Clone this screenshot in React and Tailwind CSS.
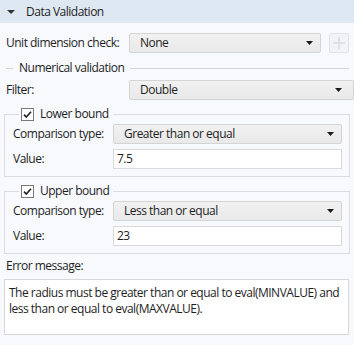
import React from "react";

function Arrow() {
  return (
    <svg width="7" height="4" viewBox="0 0 7 4" className="shrink-0">
      <path d="M0 0h7L3.5 4z" fill="#1a1a1a" />
    </svg>
  );
}

function Combo({ value, className = "" }) {
  return (
    <div
      className={`flex items-center h-[20px] pl-[10px] pr-[7px] border border-[#d4d4d4] rounded-[2px] bg-gradient-to-b from-[#f1f1f1] to-[#e9e9e9] ${className}`}
    >
      <span className="flex-1 truncate">{value}</span>
      <Arrow />
    </div>
  );
}

function Field({ value, className = "" }) {
  return (
    <div className={`flex items-center h-[20px] pl-[3px] border border-[#dadada] bg-white ${className}`}>
      {value}
    </div>
  );
}

function Check() {
  return (
    <svg width="13" height="13" viewBox="0 0 13 13" className="shrink-0">
      <rect x="0.5" y="0.5" width="12" height="12" fill="#fff" stroke="#7a7a7a" />
      <path d="M3 6.6l2.3 2.4L10 3.8" fill="none" stroke="#222" strokeWidth="1.6" />
    </svg>
  );
}

function BoundGroup({ title, comparison, value, className = "" }) {
  return (
    <fieldset className={`mx-[4px] w-[346px] border border-[#dcdcdc] pl-[8px] pr-[7px] pb-[7px] ${className}`}>
      <legend className="ml-[6px] px-[2px] flex items-center gap-[6px] h-[12px]">
        <Check />
        <span className="pr-[2px]">{title}</span>
      </legend>
      <div className="flex items-center mt-[4px]">
        <span className="w-[100px]">Comparison type:</span>
        <Combo value={comparison} className="flex-1" />
      </div>
      <div className="flex items-center mt-[5px]">
        <span className="w-[100px]">Value:</span>
        <Field value={value} className="flex-1" />
      </div>
    </fieldset>
  );
}

export default function App() {
  return (
    <div className="w-[354px] h-[345px] overflow-hidden bg-[#f7f9fc] text-[12px] leading-[16px] text-[#1e1e1e] font-['Open_Sans',sans-serif] tracking-[-0.5px]">
      {/* Section header */}
      <div className="h-[23px] bg-[#dee8f3] flex items-center">
        <svg width="8" height="4" viewBox="0 0 8 4" className="ml-[7px]">
          <path d="M0 0h8L4 4z" fill="#333" />
        </svg>
        <span className="ml-[11px]">Data Validation</span>
      </div>

      {/* Unit dimension check */}
      <div className="flex items-center mt-[10px] pl-[6px] h-[20px]">
        <span className="w-[123px]">Unit dimension check:</span>
        <Combo value="None" className="w-[192px]" />
        <div className="ml-[8px] w-[20px] h-[20px] border border-[#e1e3e6] rounded-[2px] bg-[#f1f3f6] flex items-center justify-center">
          <svg width="12" height="12" viewBox="0 0 12 12">
            <path d="M6 0v12M0 6h12" stroke="#cfd2d6" strokeWidth="1" />
          </svg>
        </div>
      </div>

      {/* Numerical validation divider */}
      <div className="flex items-center mt-[7px] h-[16px] pl-[6px] pr-[5px]">
        <div className="w-[7px] border-t border-[#d6d6d6]" />
        <span className="px-[6px]">Numerical validation</span>
        <div className="flex-1 border-t border-[#d6d6d6]" />
      </div>

      {/* Filter */}
      <div className="flex items-center mt-[4px] pl-[6px] h-[20px]">
        <span className="w-[123px]">Filter:</span>
        <Combo value="Double" className="flex-1 pr-[11px]" />
      </div>

      <BoundGroup title="Lower bound" comparison="Greater than or equal" value="7.5" className="mt-[8px]" />
      <BoundGroup title="Upper bound" comparison="Less than or equal" value="23" className="mt-[8px]" />

      {/* Error message */}
      <div className="mt-[4px] pl-[6px] h-[16px]">Error message:</div>
      <div className="mt-[5px] mx-[4px] w-[345px] h-[56px] border border-[#d8d8d8] bg-white px-[4px] pt-[5px] whitespace-nowrap">
        <div>The radius must be greater than or equal to eval(MINVALUE) and</div>
        <div>less than or equal to eval(MAXVALUE).</div>
      </div>
      <div className="mt-[10px] border-t border-[#dfe5ec]" />
    </div>
  );
}
